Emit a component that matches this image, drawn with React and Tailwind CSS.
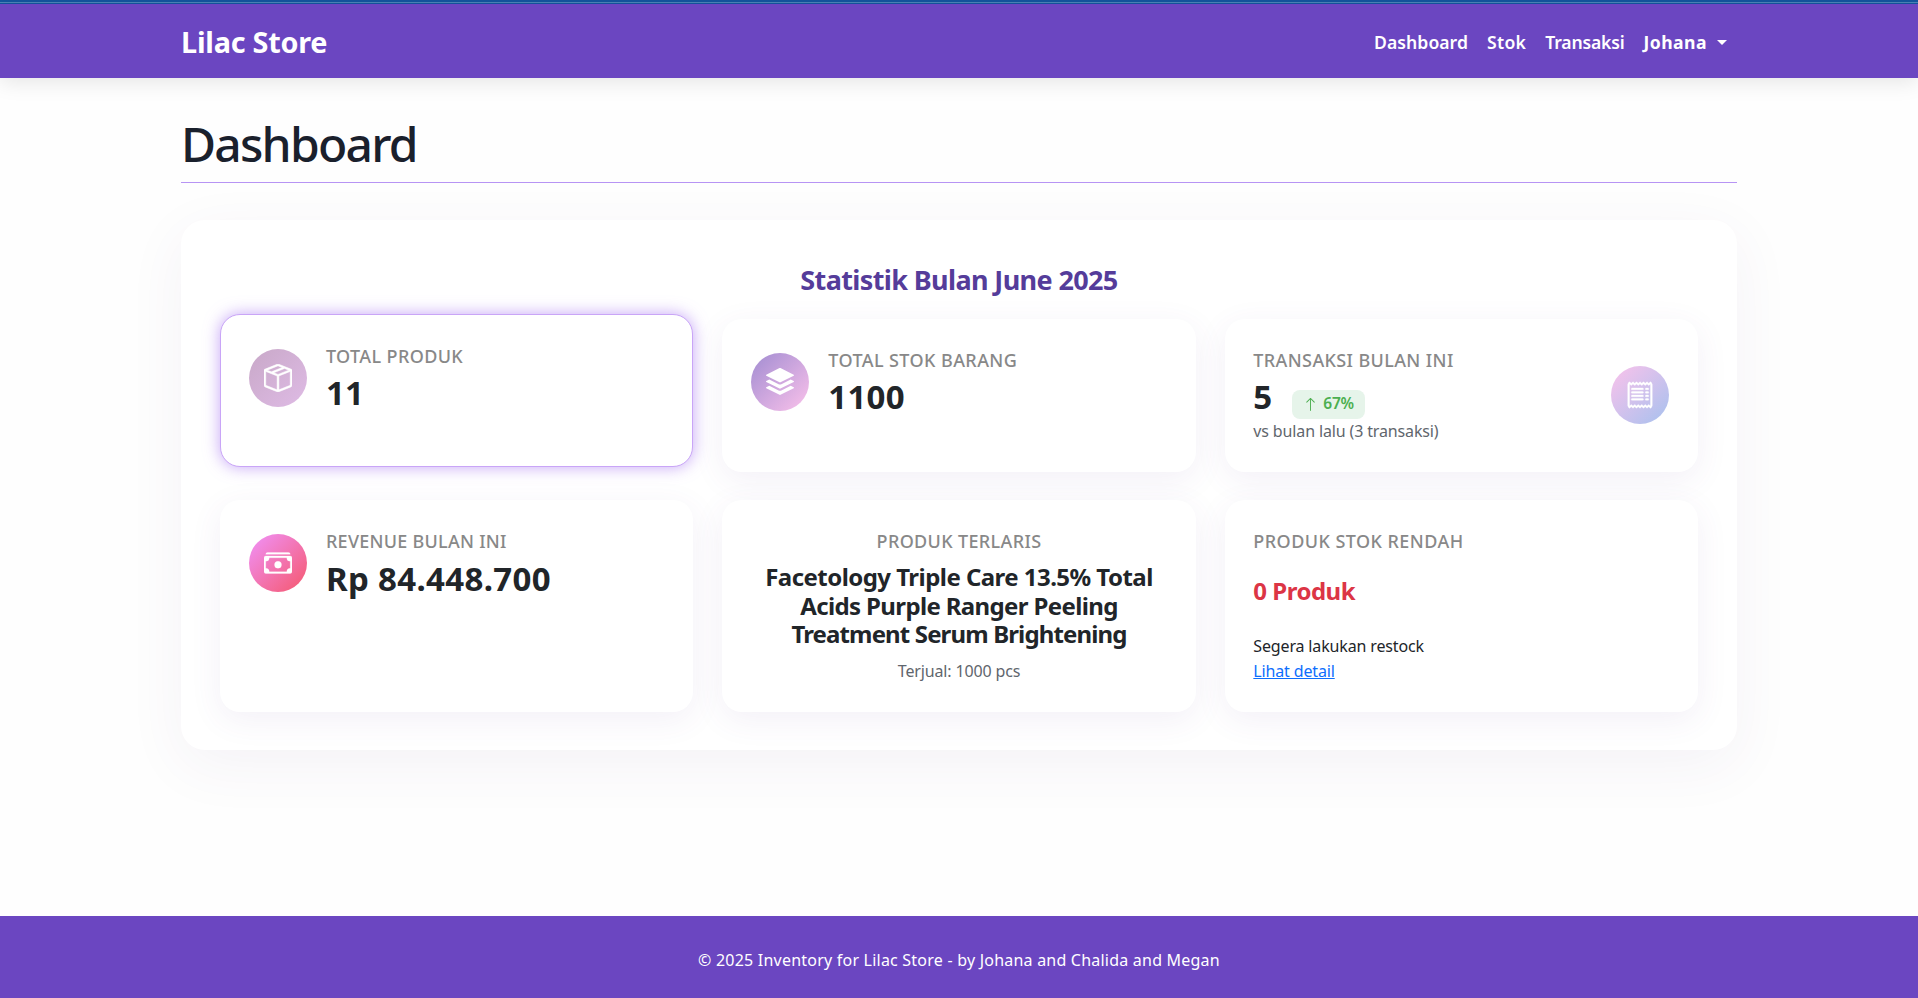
import React from "react";
import { BsArrowUp, BsBoxSeam, BsCashStack, BsReceipt, BsStack } from "react-icons/bs";

const cardShadow = "shadow-[0_8px_32px_rgba(107,60,150,0.08)]";

function Card({ className = "", children }) {
  return <section className={`rounded-[20px] bg-white p-[28.8px] ${className}`}>{children}</section>;
}

function Label({ children, className = "" }) {
  return (
    <h2 className={`whitespace-nowrap text-[18px] leading-[21px] font-medium text-[#888888] ${className}`}>
      {children}
    </h2>
  );
}

function Circle({ className, children }) {
  return (
    <div className={`flex size-[58px] shrink-0 items-center justify-center rounded-full text-[28px] text-white ${className}`}>
      {children}
    </div>
  );
}

export default function App() {
  return (
    <div className="flex min-h-[998px] flex-col bg-[#fefefe] font-['Noto_Sans',sans-serif] text-[#212529]">
      <div className="h-[2px] bg-[#14559e]" />
      <div className="h-px bg-[#4a86b8]" />
      <div className="h-px bg-[#14559e]" />
      <header className="h-[74px] bg-[#6b46c1] shadow-[0_4px_20px_rgba(0,0,0,0.1)]">
        <div className="mx-auto flex h-full w-[1556px] items-center justify-between pt-[2px] text-white">
          <a className="text-[28.8px] leading-[36px] font-bold tracking-[-0.22px]">Lilac Store</a>
          <nav className="flex items-center gap-[19px] pr-[10px] text-[17.6px] leading-[26px] font-semibold">
            <a className="tracking-[0.04px]">Dashboard</a>
            <a className="tracking-[0.3px]">Stok</a>
            <a className="tracking-[-0.18px]">Transaksi</a>
            <a className="flex items-center font-bold tracking-[0.45px]">
              Johana
              <span className="ml-[10px] border-x-[5px] border-t-[5px] border-x-transparent border-t-white" />
            </a>
          </nav>
        </div>
      </header>

      <main className="mx-auto w-[1556px] grow pt-[37px]">
        <h1 className="h-[68px] border-b border-[#b794f4] text-[48px] leading-[58px] font-medium tracking-[-1.75px] text-[#1a202c]">
          Dashboard
        </h1>

        <div className="mt-[37px] h-[530px] rounded-[24px] bg-white px-[39px] pt-[43px] shadow-[0_15px_60px_rgba(90,50,120,0.06)]">
          <h2 className="text-center text-[27px] leading-[34px] font-bold tracking-[-0.62px] text-[#553c9a]">
            Statistik Bulan June 2025
          </h2>

          <div className="mt-[22px] grid grid-cols-3 grid-rows-[153px_212px] gap-x-[28.8px] gap-y-[28px]">
            <Card className="relative -top-[5px] border border-[#c9a5f7] shadow-[0_0_16px_rgba(159,103,240,0.6)]">
              <div className="-ml-px flex items-start gap-[19.2px]">
                <Circle className="mt-[5px] bg-[linear-gradient(135deg,#c8a8c8,#dfbbe5)]"><BsBoxSeam strokeWidth={0.3} /></Circle>
                <div className="pt-[2px]">
                  <Label className="tracking-[0.38px]">TOTAL PRODUK</Label>
                  <p className="mt-[6px] text-[33px] leading-[40px] font-bold tracking-[0.2px]">11</p>
                </div>
              </div>
            </Card>

            <Card className={cardShadow}>
              <div className="flex items-start gap-[19.2px]">
                <Circle className="mt-[5px] bg-[linear-gradient(135deg,#a18cd1,#fbc2eb)]"><BsStack /></Circle>
                <div className="pt-[2px]">
                  <Label className="tracking-[0.42px]">TOTAL STOK BARANG</Label>
                  <p className="mt-[6px] text-[33px] leading-[39px] font-bold tracking-[0.3px]">1100</p>
                </div>
              </div>
            </Card>

            <Card className={`flex items-center justify-between ${cardShadow}`}>
              <div className="pt-px">
                <Label className="tracking-[0.38px]">TRANSAKSI BULAN INI</Label>
                <div className="mt-[5px] flex h-[41px] items-start">
                  <span className="text-[33px] leading-[41px] font-bold">5</span>
                  <span className="mt-[14px] ml-[20px] flex h-[29px] w-[73px] items-center gap-[5px] rounded-[8px] bg-[#e6f4ea] pl-[11px] text-[15.5px] font-semibold tracking-[-0.2px] text-[#4caf50]">
                    <BsArrowUp className="size-[15px]" />
                    67%
                  </span>
                </div>
                <p className="mt-[2px] text-[16px] leading-[24px] tracking-[-0.14px] text-[#5f666d]">
                  vs bulan lalu (3 transaksi)
                </p>
              </div>
              <Circle className="mb-[2px] bg-[linear-gradient(135deg,#fbc2eb,#a6c1ee)]"><BsReceipt stroke="currentColor" strokeWidth={0.2} /></Circle>
            </Card>

            <Card className={cardShadow}>
              <div className="flex items-start gap-[19.2px]">
                <Circle className="mt-[5px] bg-[linear-gradient(135deg,#f093fb,#f5576c)]"><BsCashStack stroke="currentColor" strokeWidth={0.15} /></Circle>
                <div className="pt-[2px]">
                  <Label className="tracking-[0.26px]">REVENUE BULAN INI</Label>
                  <p className="mt-[7px] text-[33px] leading-[40px] font-bold tracking-[0.33px]">Rp 84.448.700</p>
                </div>
              </div>
            </Card>

            <Card className={`text-center ${cardShadow}`}>
              <Label className="mt-[2px] tracking-[0.35px]">PRODUK TERLARIS</Label>
              <p className="mt-[11px] text-[24px] leading-[28.8px] font-bold whitespace-nowrap">
                <span className="block tracking-[-0.54px]">Facetology Triple Care 13.5% Total</span>
                <span className="block tracking-[-0.63px]">Acids Purple Ranger Peeling</span>
                <span className="block tracking-[-0.86px]">Treatment Serum Brightening</span>
              </p>
              <p className="mt-[10px] text-[16px] leading-[24px] tracking-[-0.15px] text-[#5f666d]">Terjual: 1000 pcs</p>
            </Card>

            <Card className={cardShadow}>
              <Label className="mt-[2px] tracking-[0.45px]">PRODUK STOK RENDAH</Label>
              <p className="mt-[24px] text-[24px] leading-[29px] font-bold tracking-[-0.5px] text-[#dc3545]">0 Produk</p>
              <p className="mt-[29px] text-[16px] leading-[25px] tracking-[-0.15px]">Segera lakukan restock</p>
              <a className="block text-[16px] leading-[25px] tracking-[-0.15px] text-[#0d6efd] underline">Lihat detail</a>
            </Card>
          </div>
        </div>
      </main>

      <footer className="flex h-[82px] items-center justify-center bg-[#6b46c1] pt-[5px] text-[16px] leading-[24px] tracking-[0.22px] text-white">
        © 2025 Inventory for Lilac Store - by Johana and Chalida and Megan
      </footer>
    </div>
  );
}
